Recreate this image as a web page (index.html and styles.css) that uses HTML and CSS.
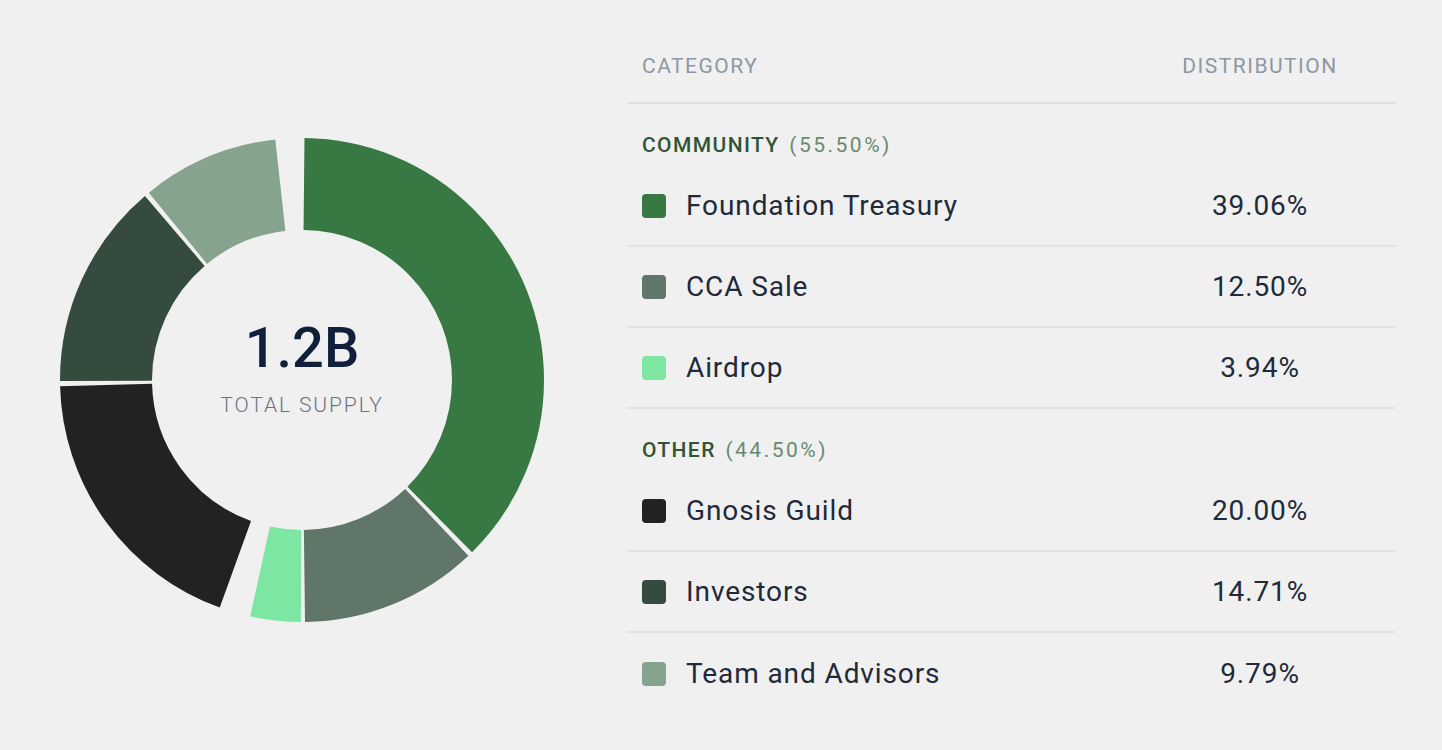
FILE: index.html
```html
<!DOCTYPE html>
<html lang="en">
<head>
<meta charset="utf-8">
<title>Token Distribution</title>
<link rel="stylesheet" href="styles.css">
</head>
<body>
<main class="page">
  <section class="chart">
    <svg class="donut" width="484" height="484" viewBox="0 0 484 484">
      <g transform="rotate(-90 242 242)" fill="none" stroke-width="92">
        <circle cx="242" cy="242" r="196" stroke="#377843" stroke-dasharray="460.79 1231.5" stroke-dashoffset="-2.05"/>
        <circle cx="242" cy="242" r="196" stroke="#5f7669" stroke-dasharray="146.07 1231.5" stroke-dashoffset="-466.95"/>
        <circle cx="242" cy="242" r="196" stroke="#7de6a3" stroke-dasharray="41.39 1231.5" stroke-dashoffset="-616.44"/>
        <circle cx="242" cy="242" r="196" stroke="#222222" stroke-dasharray="234.67 1231.5" stroke-dashoffset="-683.49"/>
        <circle cx="242" cy="242" r="196" stroke="#354b3e" stroke-dasharray="170.36 1231.5" stroke-dashoffset="-922.26"/>
        <circle cx="242" cy="242" r="196" stroke="#86a38e" stroke-dasharray="112.55 1231.5" stroke-dashoffset="-1096.72"/>
      </g>
    </svg>
    <div class="center">
      <div class="total">1.2B</div>
      <div class="total-label">TOTAL SUPPLY</div>
    </div>
  </section>

  <section class="table">
    <div class="head">
      <span class="h-cat">CATEGORY</span>
      <span class="h-dist">DISTRIBUTION</span>
    </div>

    <div class="group">
      <div class="group-label">COMMUNITY <span class="group-pct">(55.50%)</span></div>
      <div class="row">
        <span class="name"><span class="sw sw-foundation"></span>Foundation Treasury</span>
        <span class="val">39.06%</span>
      </div>
      <div class="row">
        <span class="name"><span class="sw sw-cca"></span>CCA Sale</span>
        <span class="val">12.50%</span>
      </div>
      <div class="row">
        <span class="name"><span class="sw sw-airdrop"></span>Airdrop</span>
        <span class="val">3.94%</span>
      </div>
    </div>

    <div class="group">
      <div class="group-label">OTHER <span class="group-pct">(44.50%)</span></div>
      <div class="row">
        <span class="name"><span class="sw sw-gnosis"></span>Gnosis Guild</span>
        <span class="val">20.00%</span>
      </div>
      <div class="row">
        <span class="name"><span class="sw sw-investors"></span>Investors</span>
        <span class="val">14.71%</span>
      </div>
      <div class="row last">
        <span class="name"><span class="sw sw-team"></span>Team and Advisors</span>
        <span class="val">9.79%</span>
      </div>
    </div>
  </section>
</main>
</body>
</html>
```

FILE: styles.css
```css
* { box-sizing: border-box; }
html, body {
  margin: 0;
  padding: 0;
  background: #f0f0f0;
}
body {
  font-family: Roboto, "Liberation Sans", sans-serif;
  color: #1f2a3a;
}
.page {
  display: flex;
  align-items: flex-start;
  padding-left: 60px;
  width: 1442px;
  height: 750px;
  overflow: hidden;
}
.chart {
  position: relative;
  width: 484px;
  height: 484px;
  margin-top: 138px;
  flex: none;
}
.donut { display: block; }
.center {
  position: absolute;
  inset: 0;
  display: flex;
  flex-direction: column;
  align-items: center;
  justify-content: center;
  padding-bottom: 18px;
}
.total {
  font-size: 56px;
  font-weight: 500;
  line-height: 60px;
  color: #10203a;
  margin-top: -6px;
}
.total-label {
  font-size: 21px;
  font-weight: 300;
  letter-spacing: 1.9px;
  color: #6b7282;
  line-height: 26px;
  margin-top: 14px;
}
.table {
  margin-left: 83px;
  width: 769px;
  padding-top: 48px;
  flex: none;
}
.head {
  display: grid;
  grid-template-columns: 1fr 272px;
  padding: 0 0 18px 15px;
  border-bottom: 2px solid #dedede;
  line-height: 36px;
  font-size: 21px;
  letter-spacing: 1.5px;
  color: #8e97a4;
}
.h-dist { text-align: center; }
.group-label {
  padding: 26px 0 6px 15px;
  line-height: 30px;
  font-size: 21px;
  font-weight: 500;
  letter-spacing: 1.4px;
  word-spacing: 3px;
  color: #2f5535;
}
.group-pct {
  color: #6a8a70;
  font-weight: 400;
  letter-spacing: 2.5px;
}
.row {
  display: grid;
  grid-template-columns: 1fr 272px;
  align-items: center;
  height: 81px;
  border-bottom: 2px solid #e3e3e3;
  font-size: 28px;
  letter-spacing: 0.9px;
}
.row.last { border-bottom: none; }
.name {
  display: flex;
  align-items: center;
  padding-left: 15px;
}
.val { text-align: center; }
.sw {
  width: 24px;
  height: 24px;
  border-radius: 4px;
  margin-right: 20px;
  flex: none;
}
.sw-foundation { background: #377843; }
.sw-cca { background: #5f7669; }
.sw-airdrop { background: #7de6a3; }
.sw-gnosis { background: #222222; }
.sw-investors { background: #354b3e; }
.sw-team { background: #86a38e; }
```
